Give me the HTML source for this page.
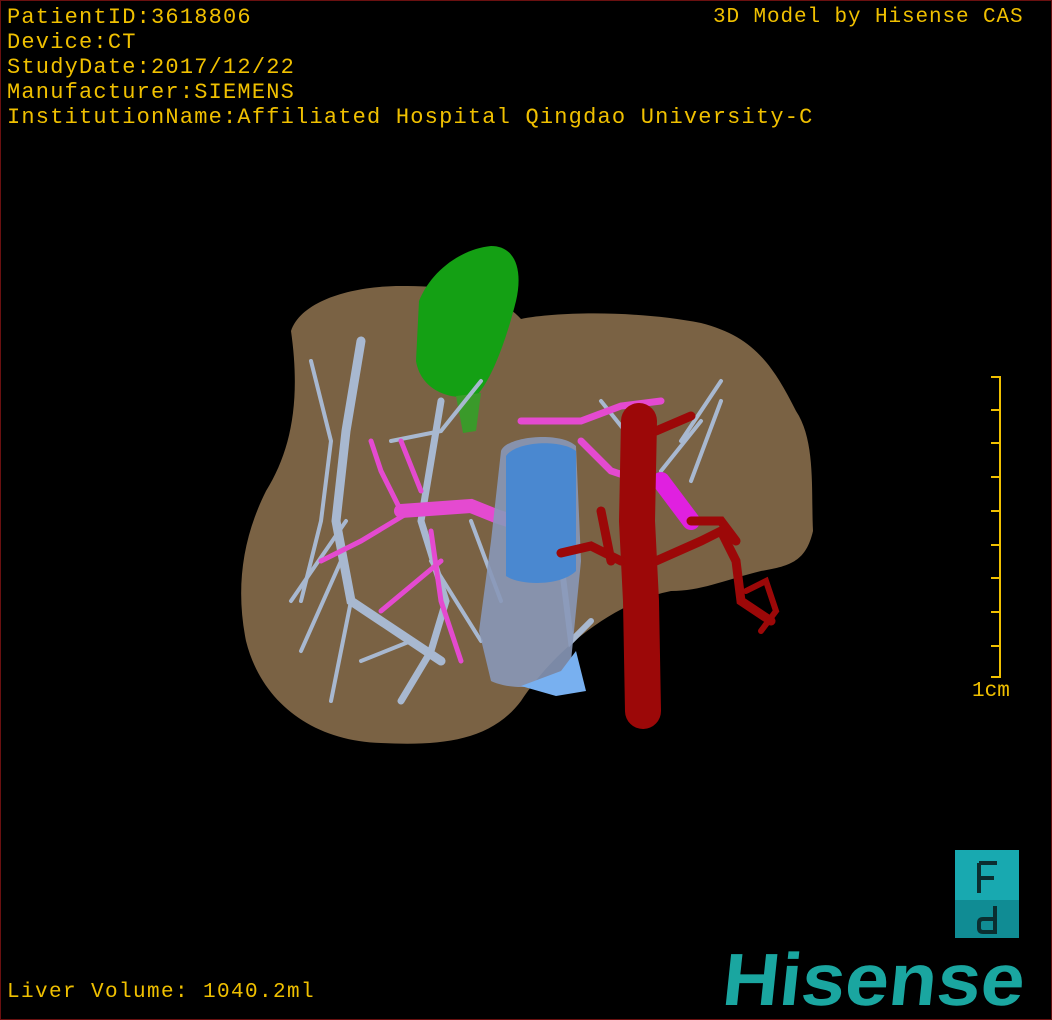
<!DOCTYPE html>
<html><head><meta charset="utf-8"><style>
html,body{margin:0;padding:0;background:#000}
#w{position:relative;width:1052px;height:1020px;background:#000;overflow:hidden;box-sizing:border-box;border:1px solid #6a1010}
.t{position:absolute;color:#f0c000;font-family:"Liberation Mono",monospace;font-size:22px;line-height:25px;white-space:pre;letter-spacing:1.2px}
</style></head><body><div id="w">
<div class="t" style="left:6px;top:4px">PatientID:3618806
Device:CT
StudyDate:2017/12/22
Manufacturer:SIEMENS
InstitutionName:Affiliated Hospital Qingdao University-C</div>
<div class="t" style="left:712px;top:4px;font-size:21px;letter-spacing:0.9px">3D Model by Hisense CAS</div>
<div class="t" style="left:6px;top:979px;font-size:21px;letter-spacing:1.4px">Liver Volume: 1040.2ml</div>
<div class="t" style="left:971px;top:678px;font-size:21px;letter-spacing:0">1cm</div>
<svg width="1052" height="1020" style="position:absolute;left:0;top:0">
<g stroke="#f0c000" stroke-width="2" fill="none">
<path d="M999 375V677"/>
<path d="M990 376H999M990 409H999M990 442H999M990 476H999M990 510H999M990 544H999M990 577H999M990 611H999M990 645H999M990 676H999"/>
</g>
<path d="M290 330 C300 300 350 285 400 285 C450 284 500 295 520 318 C560 310 640 310 700 322 C750 335 770 360 795 410 C815 440 810 490 812 530 C805 560 790 565 760 570 C720 580 700 590 670 590 C620 600 560 640 520 700 C490 740 440 745 380 742 C310 740 260 700 245 640 C235 590 240 540 265 490 C290 450 300 400 290 330Z" fill="#7a6244"/>
<path d="M418 300 C430 270 460 248 490 245 C515 245 522 270 515 300 C505 340 490 380 475 395 C450 400 420 390 415 360Z" fill="#14a014"/>
<path d="M455 395 L480 392 L475 430 L462 432Z" fill="#3a9a2a"/>
<g stroke="#a8b8d0" fill="none" stroke-linecap="round">
<path d="M360 340 L345 430 L335 520 L350 600 L410 640 L440 660" stroke-width="9"/>
<path d="M310 360 L330 440 L320 520 L300 600" stroke-width="4"/>
<path d="M440 400 L430 460 L420 520 L445 600 L430 650 L400 700" stroke-width="7"/>
<path d="M345 520 L290 600 M340 560 L300 650 M350 600 L330 700 M410 640 L360 660 M430 560 L480 640 M480 380 L440 430 L390 440 M470 520 L500 600 M600 400 L640 450 M700 420 L660 470 M720 400 L690 480 M680 440 L720 380" stroke-width="4"/>
<path d="M560 560 L570 640 L590 620" stroke-width="6"/>
</g>
<g stroke="#e44ad0" fill="none" stroke-linecap="round">
<path d="M400 510 L470 505 L495 515 L510 520" stroke-width="14"/>
<path d="M400 510 L380 470 L370 440 M410 510 L360 540 L320 560 M430 530 L440 600 L460 660 M440 560 L380 610 M400 440 L420 490" stroke-width="5"/>
<path d="M520 420 L580 420 L620 405 L660 400 M580 440 L610 470 L640 480" stroke-width="7"/>
<path d="M660 480 L690 520" stroke="#e020e0" stroke-width="18"/>
</g>
<path d="M500 450 C505 435 560 430 575 445 L580 560 L570 660 C560 690 510 690 490 680 L478 630 L490 540Z" fill="#8898b8" opacity="0.9"/>
<path d="M505 455 C515 440 560 438 575 450 L575 570 C560 585 520 585 505 575Z" fill="#4a88d0"/>
<path d="M520 685 L560 670 L575 650 L585 690 L555 695Z" fill="#78b0f0"/>
<g stroke="#9c0808" fill="none" stroke-linecap="round">
<path d="M638 420 L636 520 L640 600 L642 710" stroke-width="36"/>
<path d="M620 560 L590 545 L560 552 M655 560 L700 540 L720 530 L735 560 L740 600 L770 620 M690 520 L720 520 L735 540 M655 430 L690 415 M610 560 L600 510" stroke-width="9"/>
<path d="M745 590 L765 580 L775 610 L760 630" stroke-width="6"/>
</g>
<rect x="954" y="849" width="64" height="50" fill="#18a9b0"/>
<rect x="954" y="899" width="64" height="38" fill="#108c94"/>
<path d="M978 862 V892 M978 862 H996 M978 877 H993" stroke="#0b2e30" stroke-width="4" fill="none"/>
<path d="M994 905 V931 H982 Q978 931 978 927 V922 Q978 918 982 918 H994" stroke="#0b2e30" stroke-width="4" fill="none"/>
<text x="720" y="1004" fill="#1aa6a0" font-family="Liberation Sans,sans-serif" font-weight="bold" font-size="74" textLength="302" lengthAdjust="spacingAndGlyphs" transform="skewX(-6) translate(105 0)">Hisense</text>
</svg>
</div></body></html>
